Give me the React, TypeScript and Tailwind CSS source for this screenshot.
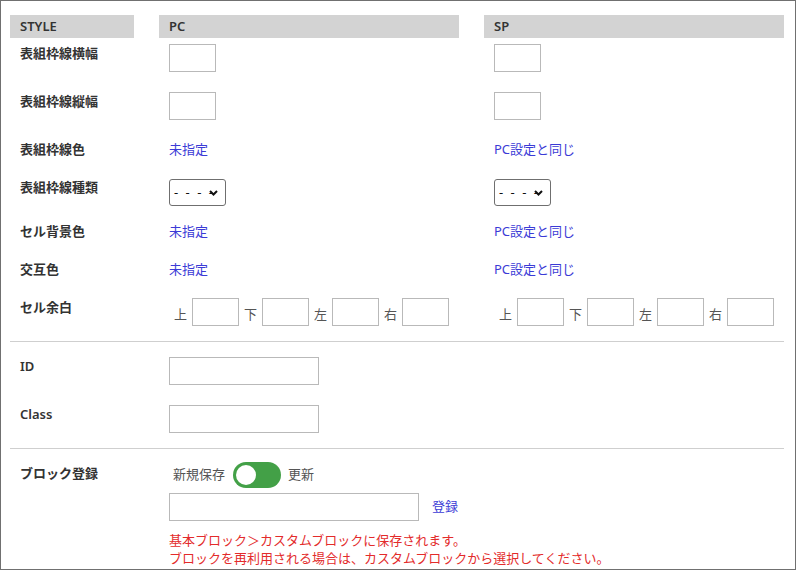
import React from 'react';

const FONT = "font-['Noto_Sans','Noto_Sans_CJK_JP',sans-serif]";

const Box = ({ w = 'w-[47px]' }: { w?: string }) => (
  <input type="text" className={`${w} h-[28px] border border-[#b9b9b9] bg-white`} />
);

const Link = ({ children }: { children: React.ReactNode }) => (
  <span className="text-[#3b3bd6] leading-[18px]">{children}</span>
);

const LineSelect = () => (
  <div className="relative mt-[1px] w-[57px] h-[27px] border border-[#6f6f6f] rounded-[3px] bg-white flex items-center">
    <span className="pl-[4px] text-[#111] leading-none tracking-[2px]">- - - -</span>
    <svg className="absolute right-[7px] top-[10px]" width="9" height="6" viewBox="0 0 9 6">
      <path d="M1 1 L4.5 4.5 L8 1" fill="none" stroke="#111" strokeWidth="2" />
    </svg>
  </div>
);

const Padding = () => (
  <div className="flex items-center gap-[5px] pl-[5px] text-[#555]">
    {['上', '下', '左', '右'].map((c) => (
      <React.Fragment key={c}>
        <span className="w-[13px] leading-[18px] mt-[3px]">{c}</span>
        <Box />
      </React.Fragment>
    ))}
  </div>
);

const Row = ({
  label,
  pc,
  sp,
  h,
}: {
  label: string;
  pc: React.ReactNode;
  sp: React.ReactNode;
  h: string;
}) => (
  <div className={`grid grid-cols-[124px_300px_300px] gap-x-[25px] ${h}`}>
    <div className="pl-[10px] font-semibold leading-[18px] text-[#333]">{label}</div>
    <div className="pl-[10px]">{pc}</div>
    <div className="pl-[10px]">{sp}</div>
  </div>
);

const Divider = () => <div className="h-px bg-[#cfcfcf]" />;

export default function App() {
  return (
    <div
      className={`${FONT} w-[796px] h-[570px] border border-[#707070] bg-white pl-[9px] pr-[11px] pt-[14px] text-[13px] text-[#333] overflow-hidden`}
    >
      {/* header */}
      <div className="grid grid-cols-[124px_300px_300px] gap-x-[25px] h-[23px] font-semibold">
        <div className="bg-[#d3d3d3] pl-[10px] leading-[23px]">STYLE</div>
        <div className="bg-[#d3d3d3] pl-[10px] leading-[23px]">PC</div>
        <div className="bg-[#d3d3d3] pl-[10px] leading-[23px]">SP</div>
      </div>

      <div className="mt-[6px]">
        <Row label="表組枠線横幅" h="h-[48px]" pc={<Box />} sp={<Box />} />
        <Row label="表組枠線縦幅" h="h-[48px]" pc={<Box />} sp={<Box />} />
        <Row label="表組枠線色" h="h-[38px]" pc={<Link>未指定</Link>} sp={<Link>PC設定と同じ</Link>} />
        <Row label="表組枠線種類" h="h-[44px]" pc={<LineSelect />} sp={<LineSelect />} />
        <Row label="セル背景色" h="h-[38px]" pc={<Link>未指定</Link>} sp={<Link>PC設定と同じ</Link>} />
        <Row label="交互色" h="h-[38px]" pc={<Link>未指定</Link>} sp={<Link>PC設定と同じ</Link>} />
        <Row label="セル余白" h="h-[28px]" pc={<Padding />} sp={<Padding />} />
      </div>

      <div className="mt-[15px]">
        <Divider />
      </div>

      <div className="pt-[15px] pb-[15px]">
        <Row label="ID" h="h-[48px]" pc={<Box w="w-[150px]" />} sp={null} />
        <Row label="Class" h="h-[28px]" pc={<Box w="w-[150px]" />} sp={null} />
      </div>

      <Divider />

      <div className="pt-[13px] grid grid-cols-[124px_625px] gap-x-[25px]">
        <div className="pl-[10px] pt-[2px] font-semibold leading-[18px]">ブロック登録</div>
        <div className="pl-[10px]">
          <div className="flex items-center h-[26px] pl-[4px] text-[#555]">
            <span>新規保存</span>
            <div className="ml-[8px] w-[48px] h-[26px] rounded-full bg-[#43a047] flex items-center">
              <div className="ml-[3px] w-[20px] h-[20px] rounded-full bg-white" />
            </div>
            <span className="ml-[7px]">更新</span>
          </div>
          <div className="mt-[5px] flex items-center">
            <Box w="w-[250px]" />
            <span className="ml-[13px] text-[#3b3bd6]">登録</span>
          </div>
          <div className="mt-[10px] text-[#e32b2b] leading-[18px]">
            <div>基本ブロック＞カスタムブロックに保存されます。</div>
            <div>ブロックを再利用される場合は、カスタムブロックから選択してください。</div>
          </div>
        </div>
      </div>
    </div>
  );
}
